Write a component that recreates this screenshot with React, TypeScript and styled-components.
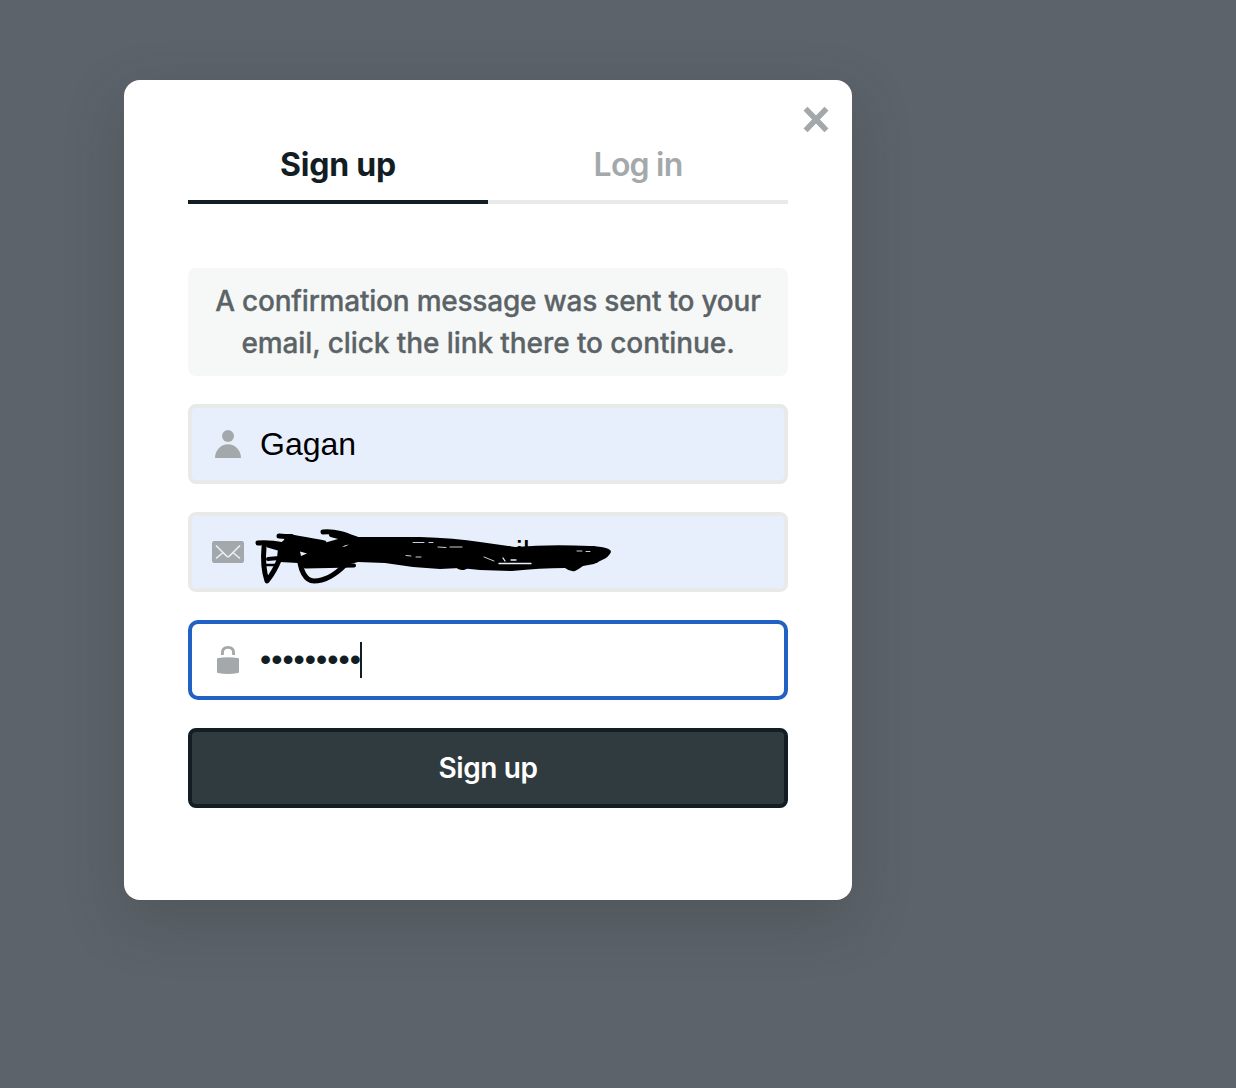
import React from "react";
import styled, { createGlobalStyle } from "styled-components";

const GlobalStyle = createGlobalStyle`
  * { box-sizing: border-box; }
  body {
    margin: 0;
    background: #5c636a;
    font-family: Inter, "Liberation Sans", sans-serif;
  }
`;

const Page = styled.main`
  min-height: 1088px;
  padding: 80px 124px;
  background: #5c636a;
`;

const Dialog = styled.section`
  position: relative;
  width: 728px;
  height: 820px;
  padding: 52px 64px 0;
  background: #fff;
  border-radius: 16px;
  box-shadow: 0 20px 56px rgba(50, 60, 58, 0.3);
`;

const CloseButton = styled.button`
  position: absolute;
  top: 26px;
  right: 22px;
  width: 28px;
  height: 28px;
  padding: 0;
  border: 0;
  background: none;
  svg { display: block; }
`;

const Tabs = styled.div`
  display: flex;
  margin-bottom: 64px;
`;

const Tab = styled.div<{ $active?: boolean }>`
  flex: 1;
  height: 72px;
  border-bottom: 4px solid ${(p) => (p.$active ? "#121e24" : "#e8eae9")};
  color: ${(p) => (p.$active ? "#121e24" : "#a3a9ab")};
  font-size: 32px;
  font-weight: ${(p) => (p.$active ? 700 : 600)};
  letter-spacing: ${(p) => (p.$active ? "-0.2px" : "-0.8px")};
  line-height: 66px;
  text-align: center;
`;

const Form = styled.div`
  display: flex;
  flex-direction: column;
  gap: 28px;
`;

const Notice = styled.p`
  height: 108px;
  margin: 0;
  padding: 12px 0;
  border-radius: 8px;
  background: #f6f8f7;
  color: #5b6367;
  font-size: 28px;
  font-weight: 500;
  line-height: 42px;
  text-align: center;
  white-space: nowrap;
  -webkit-text-stroke: 0.3px #5b6367;
`;

const NoticeLine = styled.span<{ $spacing: string }>`
  display: block;
  letter-spacing: ${(p) => p.$spacing};
`;

const Field = styled.div<{ $focused?: boolean }>`
  position: relative;
  display: flex;
  align-items: center;
  gap: 16px;
  height: 80px;
  padding: 0 20px;
  border: 4px solid ${(p) => (p.$focused ? "#2161c4" : "#e8eae9")};
  border-radius: ${(p) => (p.$focused ? "10px" : "8px")};
  background: ${(p) => (p.$focused ? "#fff" : "#e8effc")};
  color: ${(p) => (p.$focused ? "#121e24" : "#000")};
  font: 32px/40px "Liberation Sans", Arial, sans-serif;
`;

const FieldIcon = styled.svg`
  width: 32px;
  height: 32px;
  flex: none;
  fill: #a3a9ab;
`;

const Domain = styled.span`
  margin-left: 161px;
`;

const Ink = styled.svg`
  position: absolute;
  top: -4px;
  left: -4px;
  width: 600px;
  height: 80px;
  fill: none;
  stroke: #000;
  stroke-linecap: round;
  stroke-linejoin: round;
`;

const Secret = styled.span`
  display: flex;
  align-items: center;
`;

const Dots = styled.span`
  padding-bottom: 2px;
`;

const Caret = styled.i`
  width: 2px;
  height: 36px;
  margin-left: -1px;
  background: #121e24;
`;

const Submit = styled.button`
  height: 80px;
  padding: 0;
  border: 4px solid #121e24;
  border-radius: 8px;
  background: #303b3f;
  color: #fff;
  font: 600 28px/40px Inter, "Liberation Sans", sans-serif;
  letter-spacing: -0.4px;
`;

export default function App() {
  return (
    <Page>
      <GlobalStyle />
      <Dialog>
        <CloseButton aria-label="Close">
          <svg width="28" height="28" viewBox="0 0 28 28">
            <path d="M4 3 24 24M24 3 4 24" stroke="#a3a9ab" strokeWidth="5" />
            <path d="M3.5 2.7 24.5 24.3M24.5 2.7 3.5 24.3" stroke="#a3a9ab" strokeWidth="5.5" />
          </svg>
        </CloseButton>
        <Tabs>
          <Tab $active>Sign up</Tab>
          <Tab>Log in</Tab>
        </Tabs>
        <Form>
          <Notice>
            <NoticeLine $spacing="-0.22px">A confirmation message was sent to your</NoticeLine>
            <NoticeLine $spacing="-0.09px">email, click the link there to continue.</NoticeLine>
          </Notice>
          <Field>
            <FieldIcon viewBox="0 0 32 32">
              <circle cx="16" cy="8" r="6" />
              <path d="M3 30C3 22 9 16.2 16 16.2S29 22 29 30Z" />
            </FieldIcon>
            <span>Gagan</span>
          </Field>
          <Field>
            <FieldIcon viewBox="0 0 32 32">
              <rect y="5" width="32" height="22" rx="2" />
              <path
                d="M4 9.5 14.5 20Q16 21.5 17.5 20L28 9.5M4 22.5 10.5 17M28 22.5 21.5 17"
                fill="none"
                stroke="#e8effc"
                strokeWidth="1.6"
              />
            </FieldIcon>
            <Domain>@gmail.com</Domain>
            <Ink viewBox="188 512 600 80">
              <path
                fill="#000"
                stroke="none"
                d="M278 545 284 540 286 534H292L302 539 324 543 338 539 358 537H420Q455 538 480 542L515 547Q550 544 590 546 611 547 611 552 609 557 602 560L594 564 583 566Q579 569 575 571 570 572 565 568 540 568 512 571L480 570 460 568 440 569 413 567 385 563 358 562 343 566 308 568 302 567 298 563 280 562 278 559Z"
              />
              <path
                strokeWidth="5"
                d="M258 543C266 542 274 543 284 545M264 547C263 558 264 572 267 581C271 576 276 568 280 558M279 536C290 536 304 539 324 543M299 551C299 571 306 581 314 581C326 581 336 574 345 565M323 532C337 531 346 535 359 540"
              />
              <path strokeWidth="4" d="M268 545.5 280 549 279 558 268 559M290 537 296 560M305 566.5 354 565.5M331 535 350 540" />
              <path strokeWidth="2.5" d="M266 565 277 565" />
              <path
                fill="#e8effc"
                stroke="none"
                d="M300 551.5 307 553.5 301 556ZM342 547Q345 544.5 349 544.5L345 546.5Z"
              />
              <path
                strokeWidth="1"
                stroke="#c9cfda"
                d="M413 542.5H424M429 542.5H433M438 547 446 547.5M450 547H462M406 555.5 411 556M416 557H421M484 557 494 561M577 551H582M586 551.5H590"
              />
              <path strokeWidth="1.3" stroke="#e8effc" d="M499 563.5H531M503 558 505 561M511 560H516" />
            </Ink>
          </Field>
          <Field $focused>
            <FieldIcon viewBox="0 0 32 32">
              <path d="M5 15Q5 14.2 6 14Q16 12.4 26 14Q27 14.2 27 15V28Q27 28.8 26 29Q16 31 6 29Q5 28.8 5 28Z" />
              <path d="M10.4 11V9Q10.4 3.4 16 3.4T21.6 9V11" fill="none" stroke="#a3a9ab" strokeWidth="2.9" />
            </FieldIcon>
            <Secret>
              <Dots>•••••••••</Dots>
              <Caret />
            </Secret>
          </Field>
          <Submit>Sign up</Submit>
        </Form>
      </Dialog>
    </Page>
  );
}
